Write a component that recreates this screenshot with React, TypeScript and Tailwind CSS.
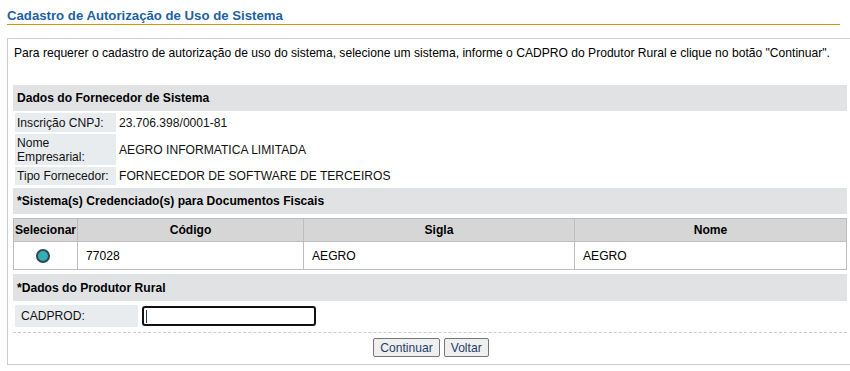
import React from "react";

export default function App() {
  return (
    <div className="bg-white text-black w-[850px] h-[371px] overflow-hidden" style={{ fontFamily: '"Liberation Sans", Arial, sans-serif' }}>
      <div className="pt-[8px] ml-[7px] w-[833px] border-b border-[#d4960f]">
        <div className="text-[13.2px] font-bold leading-[15px] pb-[1px] text-[#1f5fa3]">Cadastro de Autorização de Uso de Sistema</div>
      </div>
      <div className="mt-[13px] ml-[7px] w-[846px] h-[327px] border border-[#cccccc] px-[5px] pt-[7px] text-[12.1px] leading-[14px]">
        <div className="pl-[1px]">Para requerer o cadastro de autorização de uso do sistema, selecione um sistema, informe o CADPRO do Produtor Rural e clique no botão "Continuar".</div>
        <div className="mt-[25px] w-[834px] h-[26px] bg-[#e1e2e4] font-bold flex items-center pl-[4px]">Dados do Fornecedor de Sistema</div>
        <table className="border-separate border-spacing-[2px] text-[#111]">
          <tbody>
            <tr>
              <td className="w-[101px] bg-[#e9ecef] px-[2px] h-[19px]">Inscrição CNPJ:</td>
              <td className="px-[1px]">23.706.398/0001-81</td>
            </tr>
            <tr>
              <td className="w-[101px] bg-[#e9ecef] px-[2px] h-[31px] leading-[14px]">Nome<br />Empresarial:</td>
              <td className="px-[1px]">AEGRO INFORMATICA LIMITADA</td>
            </tr>
            <tr>
              <td className="w-[101px] bg-[#e9ecef] px-[2px] h-[18px]">Tipo Fornecedor:</td>
              <td className="px-[1px]">FORNECEDOR DE SOFTWARE DE TERCEIROS</td>
            </tr>
          </tbody>
        </table>
        <div className="mt-[1px] w-[834px] h-[26px] bg-[#e1e2e4] font-bold flex items-center pl-[4px]">*Sistema(s) Credenciado(s) para Documentos Fiscais</div>
        <table className="mt-[4px] w-[834px] border-collapse table-fixed">
          <thead>
            <tr className="bg-[#d6d6d6] h-[23px]">
              <th className="w-[64px] border border-[#bdbdbd] font-bold text-center px-0">Selecionar</th>
              <th className="w-[226px] border border-[#bdbdbd] font-bold text-center">Código</th>
              <th className="w-[271px] border border-[#bdbdbd] font-bold text-center">Sigla</th>
              <th className="border border-[#bdbdbd] font-bold text-center">Nome</th>
            </tr>
          </thead>
          <tbody>
            <tr className="h-[28px]">
              <td className="border border-[#bdbdbd]">
                <div className="ml-[22px] w-[14px] h-[14px] rounded-full border-[2px] border-[#2b4a50] bg-[#35adbb]" />
              </td>
              <td className="border border-[#bdbdbd] pl-[8px]">77028</td>
              <td className="border border-[#bdbdbd] pl-[8px]">AEGRO</td>
              <td className="border border-[#bdbdbd] pl-[8px]">AEGRO</td>
            </tr>
          </tbody>
        </table>
        <div className="mt-[4px] w-[834px] h-[27px] bg-[#e1e2e4] font-bold flex items-center pl-[4px]">*Dados do Produtor Rural</div>
        <div className="mt-[4px] flex items-center h-[22px]">
          <div className="ml-[2px] w-[123px] h-[22px] bg-[#e9ecef] flex items-center pl-[6px] text-[#111]">CADPROD:</div>
          <div className="ml-[4px] w-[174px] h-[20px] border-[2px] border-[#111] rounded-[3px] bg-white flex items-center pl-[2px]">
            <div className="w-[1px] h-[13px] bg-[#1f3d6b]" />
          </div>
        </div>
        <div className="mt-[5px] w-[834px] border-t border-dashed border-[#cccccc]" />
        <div className="mt-[5px] flex justify-center gap-[4px] pl-[2px]">
          <button className="h-[19px] px-[6px] bg-[#efefef] border border-[#767676] rounded-[2px] text-[12.1px] leading-[14px] text-[#1f3d6b]" style={{ fontFamily: '"Liberation Sans", Arial, sans-serif' }}>Continuar</button>
          <button className="h-[19px] px-[6px] bg-[#efefef] border border-[#767676] rounded-[2px] text-[12.1px] leading-[14px] text-[#1f3d6b]" style={{ fontFamily: '"Liberation Sans", Arial, sans-serif' }}>Voltar</button>
        </div>
      </div>
    </div>
  );
}
